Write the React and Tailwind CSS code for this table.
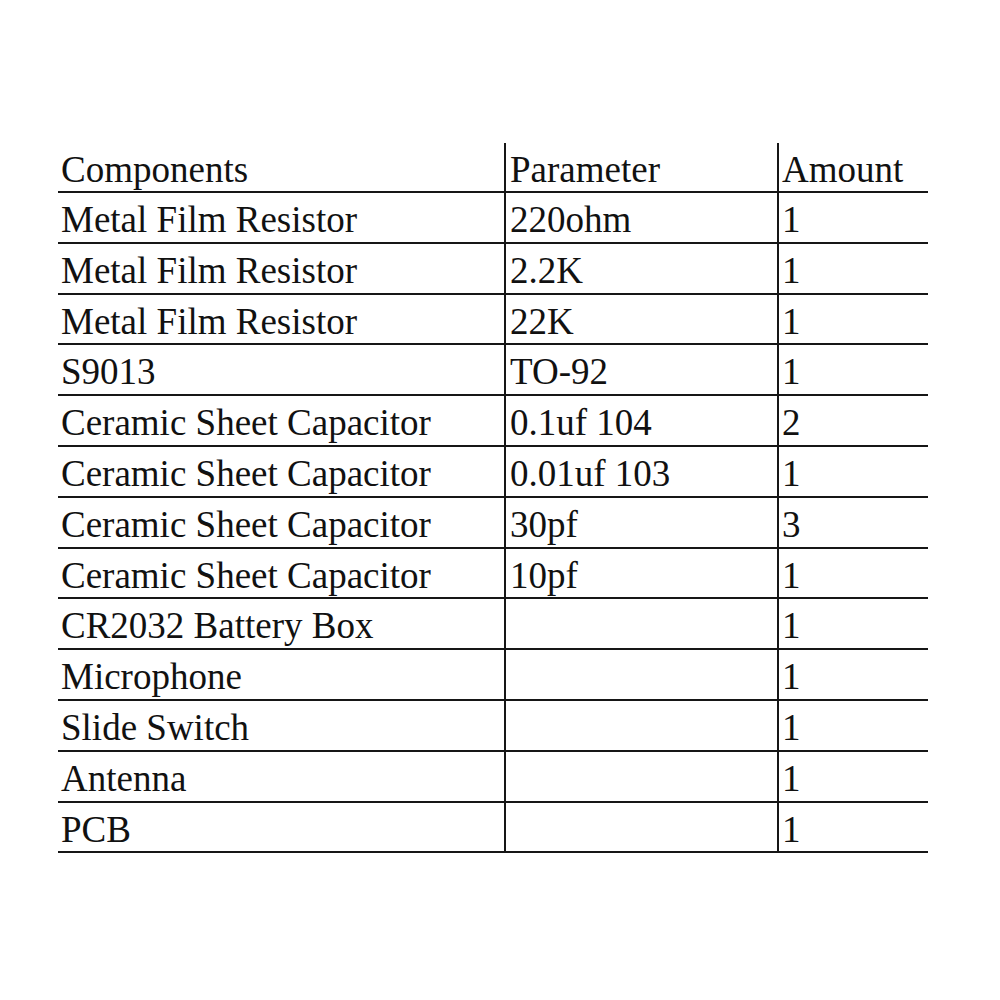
import React from 'react';

const rows = [
  ['Metal Film Resistor', '220ohm', '1'],
  ['Metal Film Resistor', '2.2K', '1'],
  ['Metal Film Resistor', '22K', '1'],
  ['S9013', 'TO-92', '1'],
  ['Ceramic Sheet Capacitor', '0.1uf 104', '2'],
  ['Ceramic Sheet Capacitor', '0.01uf 103', '1'],
  ['Ceramic Sheet Capacitor', '30pf', '3'],
  ['Ceramic Sheet Capacitor', '10pf', '1'],
  ['CR2032 Battery Box', '', '1'],
  ['Microphone', '', '1'],
  ['Slide Switch', '', '1'],
  ['Antenna', '', '1'],
  ['PCB', '', '1'],
];

const Row = ({ cells, height }) => (
  <div className={`flex border-b-2 border-[#161616] ${height}`}>
    <div className="w-[446px] pl-[3px] pt-[3px]">{cells[0]}</div>
    <div className="w-[273px] border-l-2 border-[#161616] pl-[4px] pt-[3px]">{cells[1]}</div>
    <div className="flex-1 border-l-2 border-[#161616] pl-[3px] pt-[3px]">{cells[2]}</div>
  </div>
);

const App = () => {
  return (
    <div className="w-[1000px] h-[1000px] bg-white pt-[143px]">
      <div
        className="ml-[58px] w-[870px] text-[37px] leading-[48px] text-[#111]"
        style={{ fontFamily: '"Liberation Serif", "Times New Roman", serif' }}
      >
        <Row cells={['Components', 'Parameter', 'Amount']} height="h-[50px]" />
        {rows.map((r, i) => (
          <Row key={i} cells={r} height="h-[50.8px]" />
        ))}
      </div>
    </div>
  );
};

export default App;
